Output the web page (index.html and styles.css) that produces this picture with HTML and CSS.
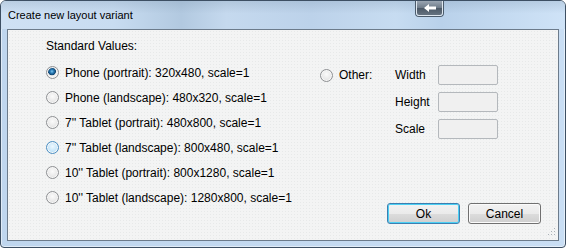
FILE: index.html
```html
<!DOCTYPE html>
<html lang="en">
<head>
  <meta charset="UTF-8" />
  <title>Create new layout variant</title>
  <link rel="stylesheet" href="styles.css">
</head>
<body>
  <div class="window">
    <div class="titlebar">
      <span class="title">Create new layout variant</span>
      <span class="back-btn">
        <svg viewBox="0 0 12 8" width="12" height="8">
          <path d="M0 4 L5 0 L5 2.5 L12 2.5 L12 5.5 L5 5.5 L5 8 Z" fill="#ffffff" />
        </svg>
      </span>
    </div>
    <div class="client">
      <div class="standard">
        <div class="group-label">Standard Values:</div>
        <label class="option"><input type="radio" name="size" checked><span>Phone (portrait): 320x480, scale=1</span></label>
        <label class="option"><input type="radio" name="size"><span>Phone (landscape): 480x320, scale=1</span></label>
        <label class="option"><input type="radio" name="size"><span>7'' Tablet (portrait): 480x800, scale=1</span></label>
        <label class="option"><input type="radio" name="size" class="hover"><span>7'' Tablet (landscape): 800x480, scale=1</span></label>
        <label class="option"><input type="radio" name="size"><span>10'' Tablet (portrait): 800x1280, scale=1</span></label>
        <label class="option"><input type="radio" name="size"><span>10'' Tablet (landscape): 1280x800, scale=1</span></label>
      </div>
      <div class="side">
        <div class="other">
          <label class="option other-choice"><input type="radio" name="size"><span>Other:</span></label>
          <div class="fields">
            <label for="w">Width</label><input id="w" class="field" disabled>
            <label for="h">Height</label><input id="h" class="field" disabled>
            <label for="s">Scale</label><input id="s" class="field" disabled>
          </div>
        </div>
        <div class="actions">
          <button class="btn default">Ok</button>
          <button class="btn">Cancel</button>
        </div>
      </div>
      <svg class="grip" viewBox="0 0 10 10" width="10" height="10">
        <rect x="8" y="0" width="1" height="1" fill="#a9b0b6" />
        <rect x="5" y="3" width="1" height="1" fill="#a9b0b6" />
        <rect x="8" y="3" width="1" height="1" fill="#a9b0b6" />
        <rect x="2" y="6" width="1" height="1" fill="#a9b0b6" />
        <rect x="5" y="6" width="1" height="1" fill="#a9b0b6" />
        <rect x="8" y="6" width="1" height="1" fill="#a9b0b6" />
      </svg>
    </div>
  </div>
</body>
</html>
```

FILE: styles.css
```css
* {
  box-sizing: border-box;
}
body {
  margin: 0;
  background: #ffffff;
  font-family: "Liberation Sans", Arial, sans-serif;
  color: #000000;
}
.window {
  width: 566px;
  height: 248px;
  border: 1px solid #3d4f63;
  border-radius: 6px 6px 4px 4px;
  background: linear-gradient(90deg, #bfd6ee 0%, #c3d9f0 50%, #c9def4 100%);
  box-shadow: inset 0 0 0 1px rgba(255, 255, 255, 0.5);
  display: flex;
  flex-direction: column;
  padding: 0 6px 6px;
  overflow: hidden;
}
.titlebar {
  position: relative;
  height: 28px;
  margin: 0 -6px;
  padding: 8px 0 0 7px;
  font-size: 11px;
  line-height: 13px;
  background:
    linear-gradient(180deg, rgba(120, 145, 170, 0.25) 0%, rgba(255, 255, 255, 0) 45%),
    linear-gradient(90deg, #cfe1f4 0%, #c8dcf1 20%, #b2c9e0 32%, #c5d9ee 40%, #bcd2ea 55%, #c7dcf1 70%, #b9d1ea 78%, #cfe3f7 100%);
}
.back-btn {
  position: absolute;
  left: 415px;
  top: -1px;
  width: 27px;
  height: 16px;
  border: 1px solid #dfe7ef;
  border-radius: 0 0 3px 3px;
  background: linear-gradient(180deg, #9aa6b3 0%, #6d7a88 50%, #4b5866 51%, #65727f 100%);
  box-shadow: 0 0 0 1px #4b5b6b;
  display: flex;
  align-items: center;
  justify-content: center;
}
.client {
  position: relative;
  flex: 1;
  display: flex;
  border: 1px solid #6c7b8b;
  background-color: #f3f4f4;
  background-image: radial-gradient(#e7e9e9 0.7px, transparent 0.9px);
  background-size: 3px 3px;
  font-size: 12px;
}
.standard {
  width: 274px;
  margin-left: 38px;
  padding-top: 9px;
}
.group-label {
  line-height: 14px;
  margin-bottom: 7px;
}
.option {
  display: flex;
  align-items: center;
  gap: 6px;
  height: 25px;
  white-space: nowrap;
}
.option input {
  appearance: none;
  margin: 0;
  width: 13px;
  height: 13px;
  border-radius: 50%;
  border: 1px solid #8e9093;
  background: radial-gradient(circle at 50% 40%, #fbfbfb 0%, #e9e9e9 55%, #d2d2d2 100%);
  box-shadow: inset 0 0 0 1px #f7f7f7;
  flex: none;
}
.option input:checked {
  background: radial-gradient(circle at 45% 40%, #7cc6ee 0, #2a7cb6 1.8px, #0f4572 3.6px, #e6e6e6 4.2px, #f4f4f4 5px, #cfcfcf 100%);
}
.option input.hover {
  border-color: #4b8ec2;
  background: radial-gradient(circle at 50% 40%, #eef8fe 0%, #c6e6fa 55%, #93cbef 100%);
}
.side {
  flex: 1;
  display: flex;
  flex-direction: column;
  padding-top: 35px;
}
.other {
  display: flex;
}
.other-choice {
  width: 75px;
  height: 20px;
}
.fields {
  display: grid;
  grid-template-columns: 43px 60px;
  row-gap: 7px;
  align-items: center;
}
.field {
  width: 60px;
  height: 20px;
  border: 1px solid #b4b8bc;
  border-radius: 2px;
  background: #f0f0f0;
}
.actions {
  margin-top: auto;
  display: flex;
  justify-content: flex-end;
  gap: 8px;
  padding: 0 17px 16px 0;
}
.btn {
  width: 73px;
  height: 21px;
  padding: 0;
  font-family: "Liberation Sans", Arial, sans-serif;
  font-size: 12px;
  color: #000000;
  border: 1px solid #707070;
  border-radius: 3px;
  background: linear-gradient(180deg, #f2f2f2 0%, #ebebeb 50%, #dddddd 51%, #cfcfcf 100%);
  box-shadow: inset 0 0 0 1px #fbfbfb;
}
.btn.default {
  border-color: #3c7fb1;
  box-shadow: inset 0 0 0 1px #4cd0f4;
}
.grip {
  position: absolute;
  right: 2px;
  bottom: 2px;
}
```
